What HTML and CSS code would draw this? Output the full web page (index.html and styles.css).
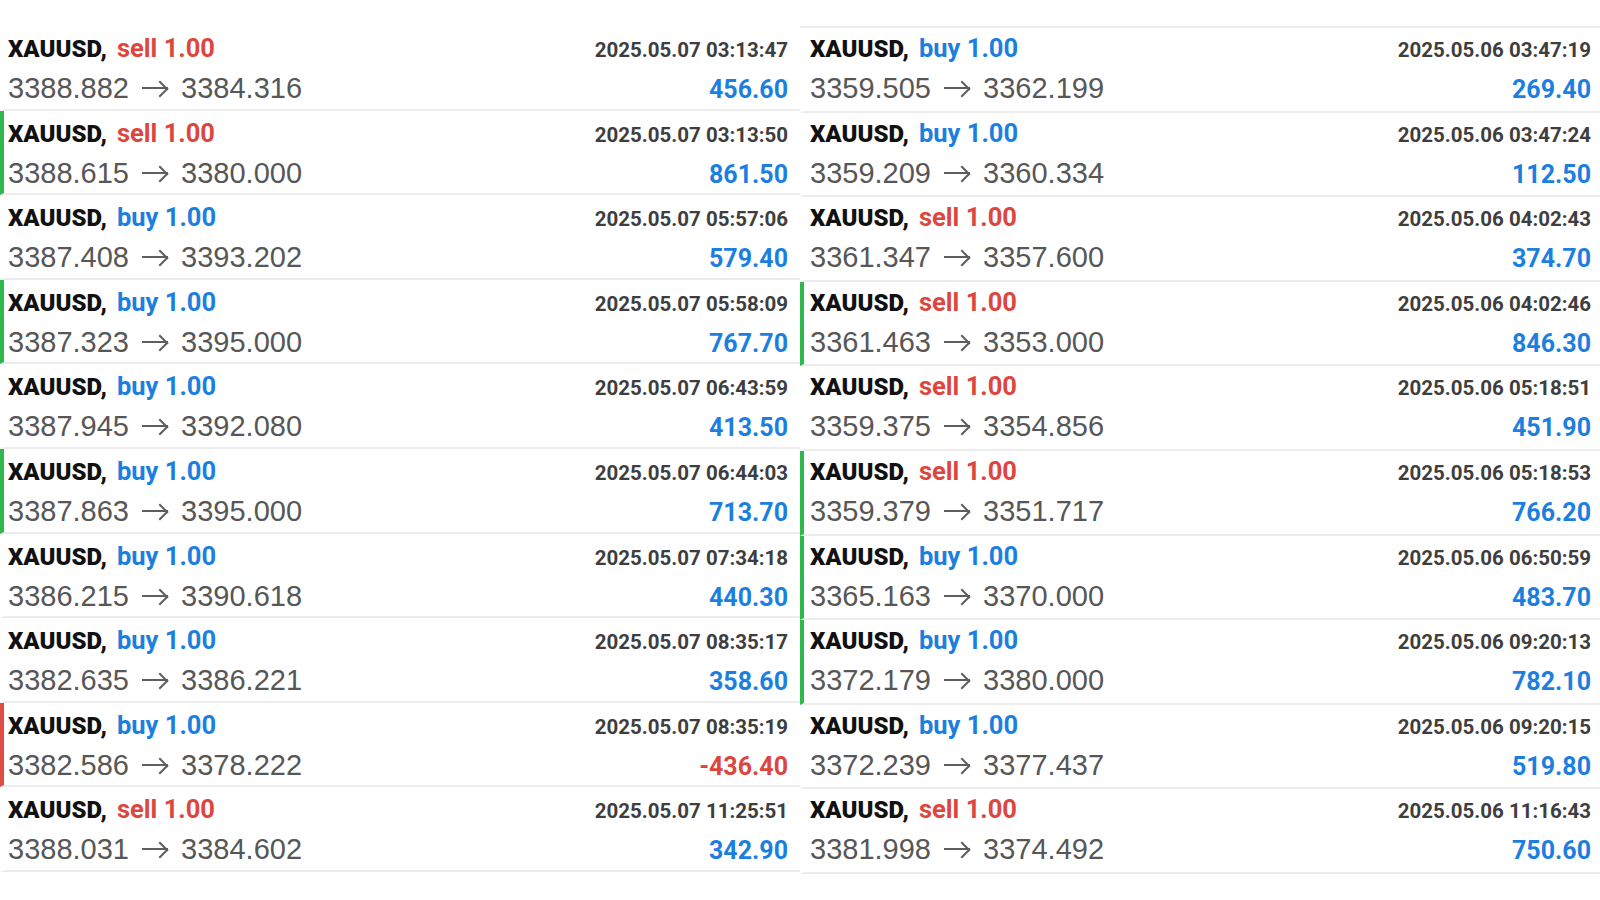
FILE: index.html
```html
<!DOCTYPE html>
<html lang="en">
<head>
	<meta charset="UTF-8">
	<title>History</title>
	<link rel="stylesheet" href="styles.css">
</head>
<body>
<div class="history">
	<ul class="deals deals_left">
		<li class="deal">
			<div class="deal_top"><span class="deal_sym">XAUUSD, <em class="sell">sell 1.00</em></span><span class="deal_time">2025.05.07 03:13:47</span></div>
			<div class="deal_bot"><span class="deal_px">3388.882 <i class="arr"></i> 3384.316</span><span class="deal_pl">456.60</span></div>
		</li>
		<li class="deal win">
			<div class="deal_top"><span class="deal_sym">XAUUSD, <em class="sell">sell 1.00</em></span><span class="deal_time">2025.05.07 03:13:50</span></div>
			<div class="deal_bot"><span class="deal_px">3388.615 <i class="arr"></i> 3380.000</span><span class="deal_pl">861.50</span></div>
		</li>
		<li class="deal">
			<div class="deal_top"><span class="deal_sym">XAUUSD, <em class="buy">buy 1.00</em></span><span class="deal_time">2025.05.07 05:57:06</span></div>
			<div class="deal_bot"><span class="deal_px">3387.408 <i class="arr"></i> 3393.202</span><span class="deal_pl">579.40</span></div>
		</li>
		<li class="deal win">
			<div class="deal_top"><span class="deal_sym">XAUUSD, <em class="buy">buy 1.00</em></span><span class="deal_time">2025.05.07 05:58:09</span></div>
			<div class="deal_bot"><span class="deal_px">3387.323 <i class="arr"></i> 3395.000</span><span class="deal_pl">767.70</span></div>
		</li>
		<li class="deal">
			<div class="deal_top"><span class="deal_sym">XAUUSD, <em class="buy">buy 1.00</em></span><span class="deal_time">2025.05.07 06:43:59</span></div>
			<div class="deal_bot"><span class="deal_px">3387.945 <i class="arr"></i> 3392.080</span><span class="deal_pl">413.50</span></div>
		</li>
		<li class="deal win">
			<div class="deal_top"><span class="deal_sym">XAUUSD, <em class="buy">buy 1.00</em></span><span class="deal_time">2025.05.07 06:44:03</span></div>
			<div class="deal_bot"><span class="deal_px">3387.863 <i class="arr"></i> 3395.000</span><span class="deal_pl">713.70</span></div>
		</li>
		<li class="deal">
			<div class="deal_top"><span class="deal_sym">XAUUSD, <em class="buy">buy 1.00</em></span><span class="deal_time">2025.05.07 07:34:18</span></div>
			<div class="deal_bot"><span class="deal_px">3386.215 <i class="arr"></i> 3390.618</span><span class="deal_pl">440.30</span></div>
		</li>
		<li class="deal">
			<div class="deal_top"><span class="deal_sym">XAUUSD, <em class="buy">buy 1.00</em></span><span class="deal_time">2025.05.07 08:35:17</span></div>
			<div class="deal_bot"><span class="deal_px">3382.635 <i class="arr"></i> 3386.221</span><span class="deal_pl">358.60</span></div>
		</li>
		<li class="deal loss">
			<div class="deal_top"><span class="deal_sym">XAUUSD, <em class="buy">buy 1.00</em></span><span class="deal_time">2025.05.07 08:35:19</span></div>
			<div class="deal_bot"><span class="deal_px">3382.586 <i class="arr"></i> 3378.222</span><span class="deal_pl neg">-436.40</span></div>
		</li>
		<li class="deal">
			<div class="deal_top"><span class="deal_sym">XAUUSD, <em class="sell">sell 1.00</em></span><span class="deal_time">2025.05.07 11:25:51</span></div>
			<div class="deal_bot"><span class="deal_px">3388.031 <i class="arr"></i> 3384.602</span><span class="deal_pl">342.90</span></div>
		</li>
	</ul>
	<ul class="deals deals_right">
		<li class="deal">
			<div class="deal_top"><span class="deal_sym">XAUUSD, <em class="buy">buy 1.00</em></span><span class="deal_time">2025.05.06 03:47:19</span></div>
			<div class="deal_bot"><span class="deal_px">3359.505 <i class="arr"></i> 3362.199</span><span class="deal_pl">269.40</span></div>
		</li>
		<li class="deal">
			<div class="deal_top"><span class="deal_sym">XAUUSD, <em class="buy">buy 1.00</em></span><span class="deal_time">2025.05.06 03:47:24</span></div>
			<div class="deal_bot"><span class="deal_px">3359.209 <i class="arr"></i> 3360.334</span><span class="deal_pl">112.50</span></div>
		</li>
		<li class="deal">
			<div class="deal_top"><span class="deal_sym">XAUUSD, <em class="sell">sell 1.00</em></span><span class="deal_time">2025.05.06 04:02:43</span></div>
			<div class="deal_bot"><span class="deal_px">3361.347 <i class="arr"></i> 3357.600</span><span class="deal_pl">374.70</span></div>
		</li>
		<li class="deal win">
			<div class="deal_top"><span class="deal_sym">XAUUSD, <em class="sell">sell 1.00</em></span><span class="deal_time">2025.05.06 04:02:46</span></div>
			<div class="deal_bot"><span class="deal_px">3361.463 <i class="arr"></i> 3353.000</span><span class="deal_pl">846.30</span></div>
		</li>
		<li class="deal">
			<div class="deal_top"><span class="deal_sym">XAUUSD, <em class="sell">sell 1.00</em></span><span class="deal_time">2025.05.06 05:18:51</span></div>
			<div class="deal_bot"><span class="deal_px">3359.375 <i class="arr"></i> 3354.856</span><span class="deal_pl">451.90</span></div>
		</li>
		<li class="deal win">
			<div class="deal_top"><span class="deal_sym">XAUUSD, <em class="sell">sell 1.00</em></span><span class="deal_time">2025.05.06 05:18:53</span></div>
			<div class="deal_bot"><span class="deal_px">3359.379 <i class="arr"></i> 3351.717</span><span class="deal_pl">766.20</span></div>
		</li>
		<li class="deal win">
			<div class="deal_top"><span class="deal_sym">XAUUSD, <em class="buy">buy 1.00</em></span><span class="deal_time">2025.05.06 06:50:59</span></div>
			<div class="deal_bot"><span class="deal_px">3365.163 <i class="arr"></i> 3370.000</span><span class="deal_pl">483.70</span></div>
		</li>
		<li class="deal win">
			<div class="deal_top"><span class="deal_sym">XAUUSD, <em class="buy">buy 1.00</em></span><span class="deal_time">2025.05.06 09:20:13</span></div>
			<div class="deal_bot"><span class="deal_px">3372.179 <i class="arr"></i> 3380.000</span><span class="deal_pl">782.10</span></div>
		</li>
		<li class="deal">
			<div class="deal_top"><span class="deal_sym">XAUUSD, <em class="buy">buy 1.00</em></span><span class="deal_time">2025.05.06 09:20:15</span></div>
			<div class="deal_bot"><span class="deal_px">3372.239 <i class="arr"></i> 3377.437</span><span class="deal_pl">519.80</span></div>
		</li>
		<li class="deal">
			<div class="deal_top"><span class="deal_sym">XAUUSD, <em class="sell">sell 1.00</em></span><span class="deal_time">2025.05.06 11:16:43</span></div>
			<div class="deal_bot"><span class="deal_px">3381.998 <i class="arr"></i> 3374.492</span><span class="deal_pl">750.60</span></div>
		</li>
	</ul>
</div>
</body>
</html>
```

FILE: styles.css
```css
*{margin:0;padding:0;box-sizing:border-box;}
body{background:#fff;font-family:Roboto,"Liberation Sans",Arial,sans-serif;}
ul,li{list-style:none;}
em,i{font-style:normal;}
.history{display:flex;padding-top:26px;}
.deals{width:800px;}
.deals_right{border-top:2px solid #ececec;}
.deal{height:84.6px;border-bottom:2px solid #ececec;border-left:4px solid transparent;padding:7px 12px 0 4px;}
.deals_right .deal{padding:5px 9px 0 6px;}
.deal.win{border-left-color:#2fb84b;}
.deal.loss{border-left-color:#df4d45;}
.deal_top,.deal_bot{display:flex;justify-content:space-between;align-items:baseline;}
.deal_top{height:30px;line-height:30px;}
.deal_bot{height:46px;line-height:50px;}
.deal_sym{font-size:24px;font-weight:900;color:#111;}
.deal_sym em{margin-left:4px;font-size:25.5px;font-weight:bold;}
.deal_sym .sell{color:#dc463e;}
.deal_sym .buy{color:#1c7fe0;}
.deal_time{font-size:20.5px;font-weight:bold;color:#3e3e3e;}
.deal_px{font-family:"Liberation Sans",Arial,sans-serif;font-size:29px;color:#575757;}
.deal_px .arr{position:relative;display:inline-block;width:26px;height:2px;margin:0 5px;background:#5e5e5e;vertical-align:9px;}
.deal_px .arr:after{content:"";position:absolute;right:2px;top:-4px;width:10px;height:10px;border-top:2px solid #5e5e5e;border-right:2px solid #5e5e5e;transform:rotate(45deg);}
.deal_pl{font-size:25px;font-weight:bold;color:#1c7fe0;}
.deal_pl.neg{color:#dc463e;}
```
